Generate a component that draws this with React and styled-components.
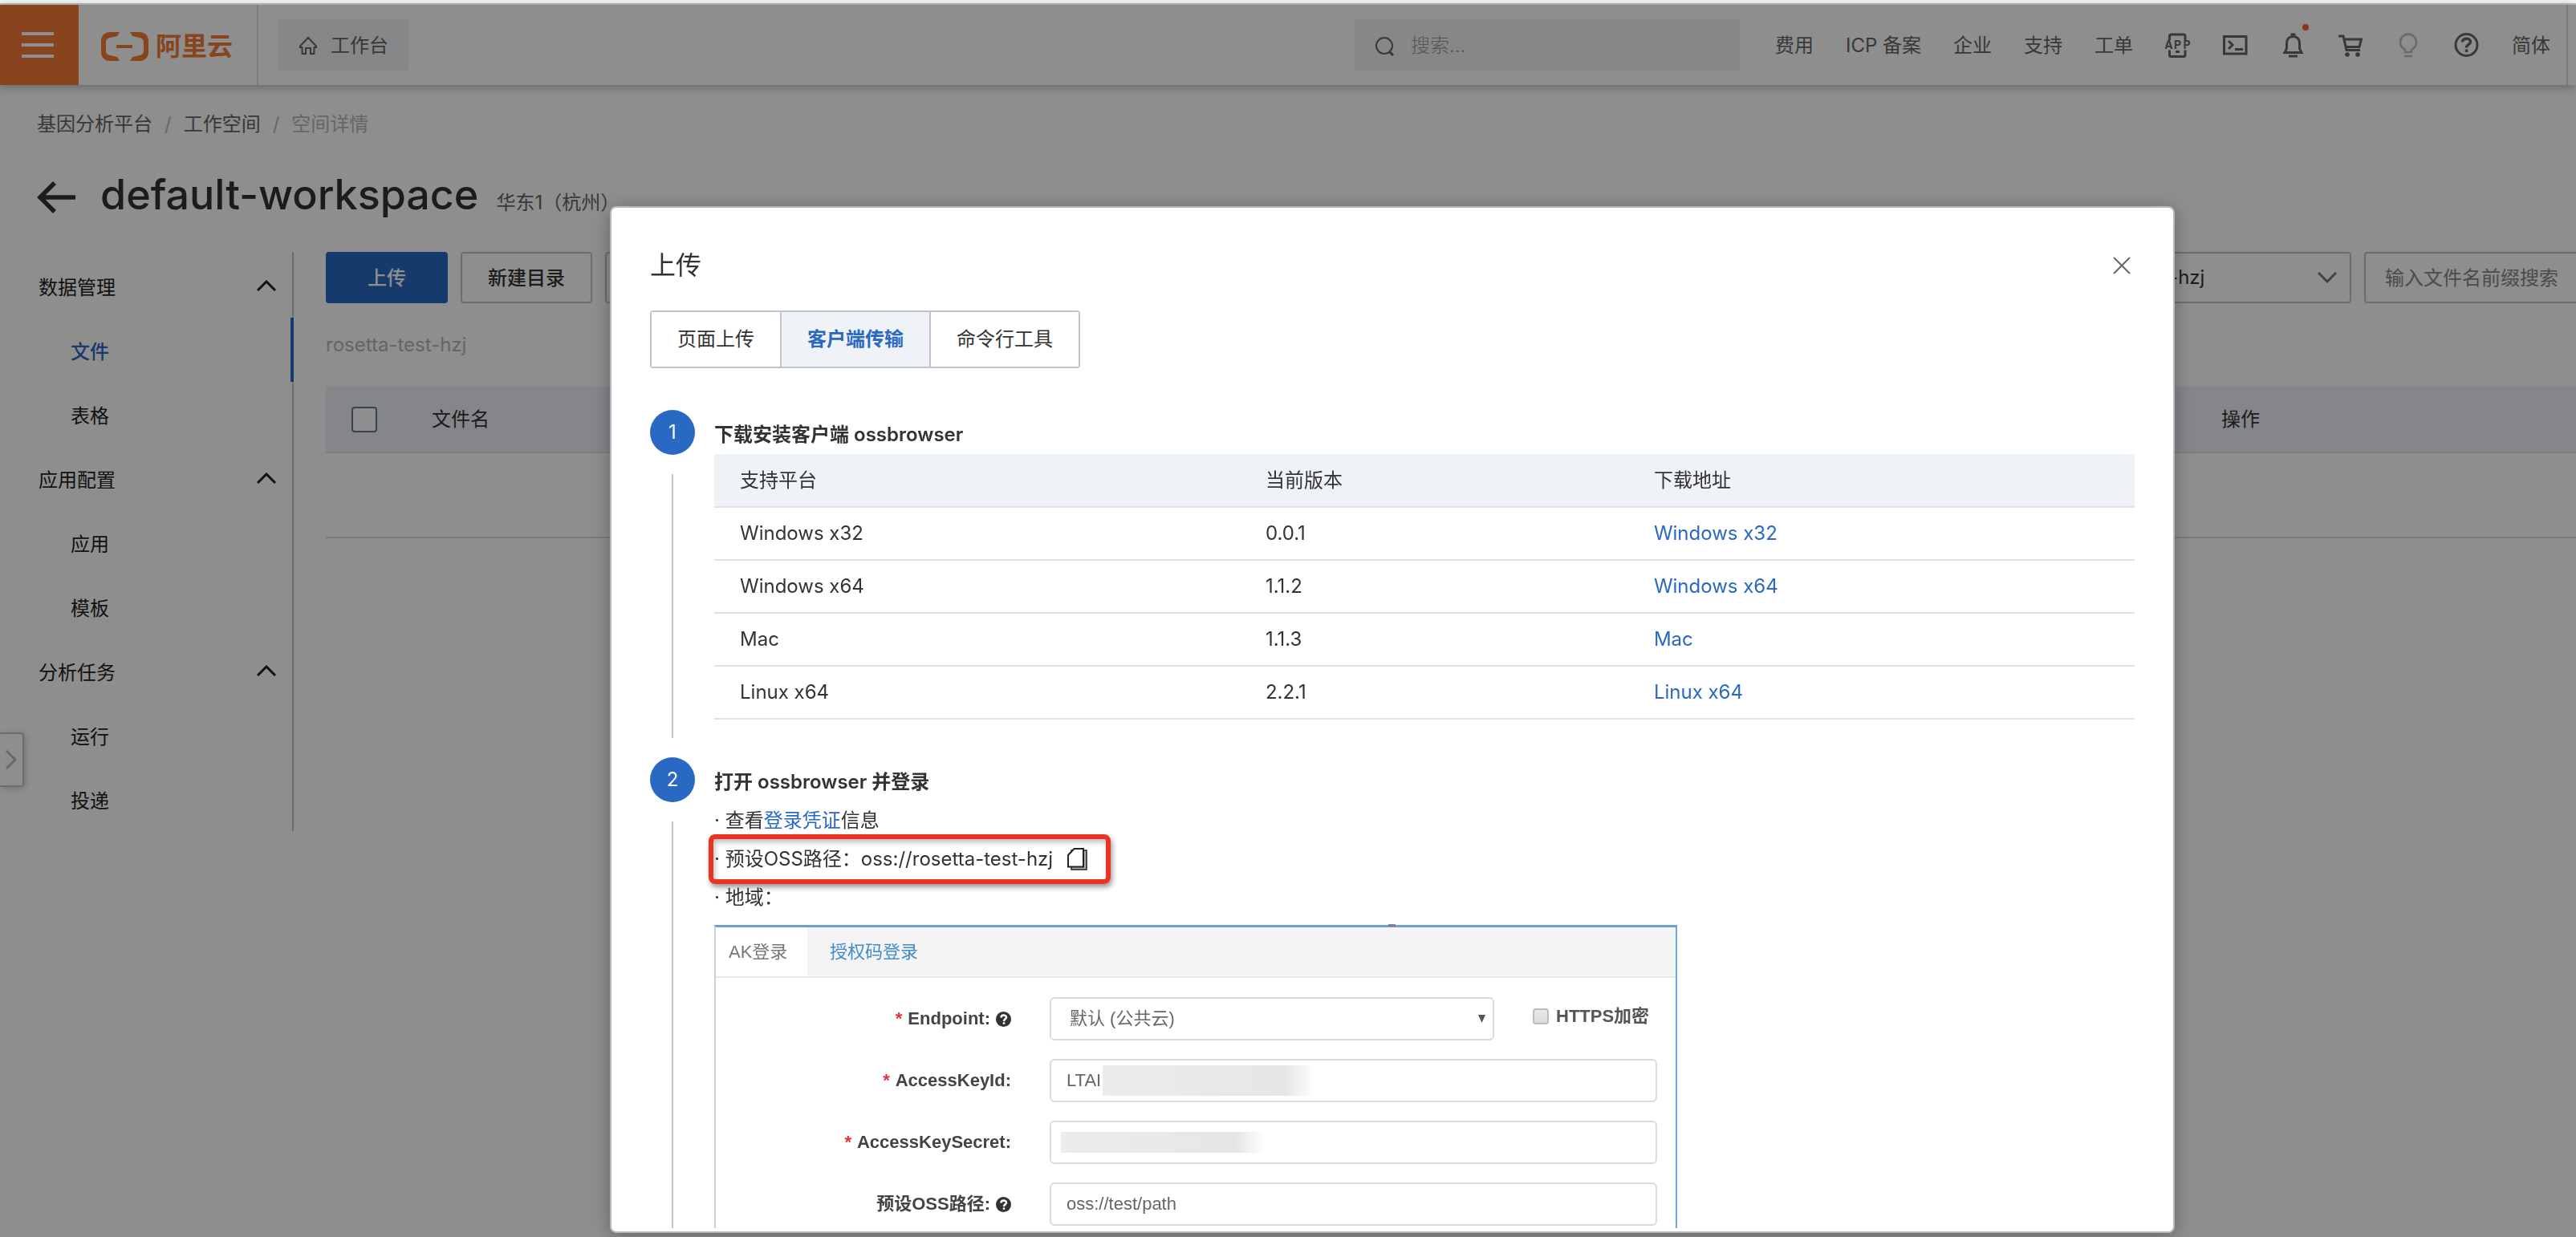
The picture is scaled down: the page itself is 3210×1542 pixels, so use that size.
import React, { useState } from "react";
import styled, { createGlobalStyle } from "styled-components";

const GlobalStyle = createGlobalStyle`
  * {
    box-sizing: border-box;
  }

  body {
    margin: 0;
    overflow: hidden;
    background: #fff;
    color: #333;
    font-family: Inter, "Noto Sans CJK SC", sans-serif;
    font-size: 24px;
    line-height: 48px;
  }

  button,
  input,
  select {
    font: inherit;
    color: inherit;
  }

  a {
    color: inherit;
    text-decoration: none;
  }

  svg {
    display: block;
    flex: none;
  }
`;

// Page shell
const Page = styled.div`
  min-height: 100vh;
`;

const TopStrip = styled.div`
  height: 6px;
  background: #f5f5f5;
  border-bottom: 2px solid #bdbfbe;
`;

const Header = styled.header`
  position: relative;
  display: flex;
  align-items: center;
  height: 100px;
  color: #666;
  box-shadow: 0 2px 12px rgba(0, 0, 0, 0.3);
`;

const MenuButton = styled.button`
  display: flex;
  justify-content: center;
  align-items: center;
  width: 98px;
  height: 100px;
  padding: 0 4px 0 0;
  border: none;
  background: #f27b35;
`;

const Logo = styled.a`
  display: flex;
  align-items: center;
  gap: 8px;
  height: 100px;
  padding: 4px 30px 0 28px;
  border-right: 2px solid #e0e0e0;
  color: #f27b35;
  font-size: 32px;
  font-weight: 700;
`;

const HomeLink = styled.a`
  display: flex;
  align-items: center;
  gap: 16px;
  height: 64px;
  margin-left: 24px;
  padding: 2px 26px 0;
  border-radius: 4px;
  background: #eff2f6;
`;

const SearchBox = styled.label`
  display: flex;
  align-items: center;
  gap: 20px;
  width: 480px;
  height: 64px;
  margin-left: auto;
  padding: 2px 24px 0;
  background: #eff2f6;
`;

const SearchInput = styled.input`
  flex: 1;
  min-width: 0;
  padding: 0;
  border: none;
  background: none;
  outline: none;

  &::placeholder {
    color: #999;
    font-weight: 300;
    opacity: 1;
  }
`;

const TopMenu = styled.nav`
  display: flex;
  align-items: center;
  gap: 40px;
  height: 100px;
  margin: 0 10px 0 44px;
  padding: 2px 20px 0 0;
  border-right: 2px solid #dcdcdc;
`;

const IconLink = styled.a`
  position: relative;
  color: ${(props) => (props.$muted ? "#bbbec2" : "#666")};
`;

const Dot = styled.span`
  position: absolute;
  top: -11px;
  right: -3px;
  width: 8px;
  height: 8px;
  border-radius: 50%;
  background: #f0672a;
`;

const Breadcrumb = styled.nav`
  display: flex;
  gap: 15px;
  padding: 25px 46px 0;
`;

const Crumb = styled.a`
  color: ${(props) => (props.$current ? "#b8b8b8" : "#666")};
`;

const Slash = styled.span`
  color: #bbb;
`;

const TitleRow = styled.div`
  display: flex;
  align-items: center;
  gap: 30px;
  padding: 28px 46px 0;
`;

const Title = styled.h1`
  margin: 0;
  padding-top: 4px;
  font-size: 52px;
  font-weight: 500;
  line-height: 64px;
`;

const Region = styled.span`
  margin-left: 22px;
  color: #666;
  font-size: 24px;
  font-weight: 400;
`;

const Workspace = styled.div`
  display: flex;
  gap: 40px;
  margin-top: 29px;
  padding-left: 46px;
`;

// Side navigation
const SideNav = styled.nav`
  flex: none;
  width: 320px;
  padding-top: 2px;
  border-right: 2px solid #c4c4c4;
`;

const GroupButton = styled.button`
  display: flex;
  justify-content: space-between;
  align-items: center;
  width: 100%;
  height: 80px;
  padding: 6px 20px 0 2px;
  border: none;
  background: none;
  color: #222;

  svg {
    margin-bottom: 6px;
  }
`;

const NavLink = styled.a`
  display: flex;
  align-items: center;
  height: 80px;
  margin-right: -2px;
  padding: 6px 0 0 42px;
  border-right: 4px solid ${(props) => (props.$active ? "#2968c3" : "transparent")};
  color: ${(props) => (props.$active ? "#2968c3" : "#222")};
  font-weight: ${(props) => (props.$active ? 500 : 400)};
`;

const DrawerHandle = styled.button`
  position: fixed;
  left: 0;
  top: 913px;
  display: flex;
  justify-content: center;
  align-items: center;
  width: 30px;
  height: 68px;
  padding: 0;
  border: 2px solid #c4c4c4;
  border-left: none;
  border-radius: 0 4px 4px 0;
  background: #fff;
  color: #bbb;
  box-shadow: 2px 2px 8px rgba(0, 0, 0, 0.2);
`;

// File list
const Content = styled.main`
  flex: 1;
  min-width: 0;
`;

const Toolbar = styled.div`
  display: flex;
  gap: 16px;
`;

const Button = styled.button`
  height: 64px;
  padding: 2px ${(props) => (props.$primary ? "52px" : "32px")} 0;
  border: ${(props) => (props.$primary ? "none" : "2px solid #c0c4cc")};
  border-radius: 4px;
  background: ${(props) => (props.$primary ? "#2968c3" : "#fff")};
  color: ${(props) => (props.$primary ? "#fff" : "#333")};
  font-weight: 500;
`;

const BucketPicker = styled.div`
  position: relative;
  width: 376px;
  margin-left: auto;
`;

const BucketSelect = styled.select`
  width: 100%;
  height: 64px;
  padding: 0 16px;
  border: 2px solid #c0c4cc;
  border-radius: 4px;
  background: #fff;
  appearance: none;
`;

const PickerArrow = styled.span`
  position: absolute;
  top: 25px;
  right: 18px;
  color: #777;
  pointer-events: none;
`;

const PrefixInput = styled.input`
  width: 264px;
  height: 64px;
  padding: 0 0 0 24px;
  border: 2px solid #c0c4cc;
  border-right: none;
  border-radius: 4px 0 0 4px;
  outline: none;

  &::placeholder {
    color: #888;
    opacity: 1;
  }
`;

const PathText = styled.div`
  margin: 28px 0;
  color: #b5b5b5;
`;

const FileTable = styled.table`
  width: 100%;
  border-collapse: collapse;
  table-layout: fixed;

  th {
    height: 82px;
    padding: 0 32px;
    border-bottom: 2px solid #dedede;
    background: #eef0f7;
    text-align: left;
    font-weight: 400;
  }

  td {
    height: 106px;
    border-bottom: 2px solid #dedede;
  }
`;

const CheckBox = styled.input`
  display: block;
  width: 32px;
  height: 32px;
  margin: 0;
  border: 2px solid #66788c;
  border-radius: 4px;
  background: #fff;
  appearance: none;
`;

// Dialog
const Overlay = styled.div`
  position: fixed;
  inset: 6px 0 0;
  display: flex;
  padding: 251px 500px 5px 760px;
  background: rgba(0, 0, 0, 0.445);
`;

const Dialog = styled.section`
  flex: 1;
  display: flex;
  flex-direction: column;
  min-width: 0;
  padding: 48px 48px 4px;
  border: 2px solid #b4bac2;
  border-radius: 8px;
  background: #fff;
  box-shadow: 0 4px 24px rgba(0, 0, 0, 0.3);
`;

const DialogHeader = styled.div`
  display: flex;
  justify-content: space-between;
  align-items: center;
`;

const DialogTitle = styled.h2`
  margin: 0;
  font-size: 32px;
  font-weight: 400;
`;

const CloseButton = styled.button`
  padding: 0 5px;
  border: none;
  background: none;
  color: #666;
`;

const Tabs = styled.div`
  flex: none;
  display: flex;
  align-self: flex-start;
  margin: 32px 0 52px;
  border: 2px solid #c0c4cc;
  border-radius: 4px;
`;

const Tab = styled.button`
  height: 68px;
  padding: 0 32px;
  border: none;
  background: ${(props) => (props.$active ? "#eff2f7" : "#fff")};
  color: ${(props) => (props.$active ? "#2968c3" : "#333")};
  font-weight: ${(props) => (props.$active ? 700 : 400)};

  & + & {
    border-left: 2px solid #c0c4cc;
  }
`;

const Steps = styled.div`
  flex: 1;
  min-height: 0;
  overflow: hidden;
`;

const StepRow = styled.div`
  display: flex;
  gap: 24px;
`;

const StepRail = styled.div`
  flex: none;
  display: flex;
  flex-direction: column;
  align-items: center;
  width: 56px;

  &::after {
    content: "";
    flex: 1;
    width: 2px;
    margin: 24px 0;
    background: #c0c4cc;
  }
`;

const StepNumber = styled.span`
  width: 56px;
  height: 56px;
  border-radius: 50%;
  background: #2968c3;
  color: #fff;
  line-height: 56px;
  text-align: center;
`;

const StepBody = styled.div`
  flex: 1;
  min-width: 0;
  padding: 7px 0 47px;
`;

const StepTitle = styled.h3`
  margin: 0;
  font-size: 24px;
  font-weight: 600;
`;

const DownloadTable = styled.table`
  width: 100%;
  border-collapse: collapse;
  table-layout: fixed;

  th,
  td {
    height: 66px;
    padding: 0 32px;
    border-bottom: 2px solid #e0e1e3;
    text-align: left;
    font-weight: 400;
  }

  th {
    background: #eff2f7;
  }
`;

const Link = styled.a`
  color: #2968c3;
`;

const Hint = styled.p`
  margin: 0;
`;

const PathHint = styled.div`
  position: relative;
  display: flex;
  align-items: center;
  width: fit-content;
`;

const CopyButton = styled.button`
  margin-left: 18px;
  padding: 0;
  border: none;
  background: none;
`;

const Highlight = styled.span`
  position: absolute;
  inset: -7px -29px -7px -7px;
  border: 6px solid #eb3323;
  border-radius: 8px;
  box-shadow: 2px 4px 6px rgba(0, 0, 0, 0.4), inset 2px 4px 6px rgba(0, 0, 0, 0.25);
  pointer-events: none;
`;

// Login form preview
const LoginCard = styled.form`
  position: relative;
  max-width: 1200px;
  margin-top: 10px;
  border: 2px solid #cfcfcf;
  border-top: 3px solid #6d9fd4;
  border-right: 2px solid #6da5e3;
  color: #666;
  font-family: "Liberation Sans", "Noto Sans CJK SC", sans-serif;
  font-size: 22px;
  line-height: 32px;
`;

const CardMark = styled.span`
  position: absolute;
  top: -4px;
  left: 838px;
  width: 9px;
  height: 3px;
  background: #8b7f92;
`;

const LoginTabs = styled.div`
  display: flex;
  background: #f4f4f4;
  border-bottom: 2px solid #e8e8e8;
`;

const LoginTab = styled.button`
  width: ${(props) => (props.$active ? "114px" : "auto")};
  height: 61px;
  margin-bottom: ${(props) => (props.$active ? "-2px" : "0")};
  padding: ${(props) => (props.$active ? "0 16px" : "0 28px")};
  border: none;
  background: ${(props) => (props.$active ? "#fff" : "none")};
  color: ${(props) => (props.$active ? "#777" : "#428bca")};
  text-align: left;
  white-space: nowrap;
`;

const LoginFields = styled.div`
  display: grid;
  gap: 23px;
  padding: 24px 23px 40px 0;
`;

const FieldRow = styled.div`
  display: grid;
  grid-template-columns: 368px 1fr;
  align-items: center;
  column-gap: 48px;
`;

const FieldLabel = styled.label`
  display: flex;
  justify-content: flex-end;
  align-items: center;
  gap: 7px;
  color: #444;
  font-weight: 700;
`;

const Required = styled.span`
  color: #e0313c;
`;

const FieldLine = styled.div`
  position: relative;
  display: flex;
  align-items: center;
`;

const Field = styled.input`
  width: 100%;
  height: 54px;
  padding: 0 19px;
  border: 2px solid #dadada;
  border-radius: 6px;
  background: #fff;
  outline: none;
`;

const EndpointPicker = styled.div`
  position: relative;
  width: 554px;
`;

const EndpointSelect = styled.select`
  width: 100%;
  height: 54px;
  padding: 0 23px;
  border: 2px solid #dadada;
  border-radius: 6px;
  background: #fff;
  appearance: none;
`;

const EndpointArrow = styled.span`
  position: absolute;
  right: 11px;
  top: 22px;
  width: 9px;
  height: 10px;
  background: #555;
  clip-path: polygon(0 0, 100% 0, 50% 100%);
  pointer-events: none;
`;

const HttpsLabel = styled.label`
  display: flex;
  align-items: center;
  gap: 9px;
  margin-left: 48px;
  padding-bottom: 6px;
  color: #555;
  font-weight: 700;
  white-space: nowrap;
`;

const HttpsCheck = styled.input`
  width: 20px;
  height: 20px;
  margin: 0;
  border: 2px solid #bbb;
  border-radius: 4px;
  background: linear-gradient(#e8e8e8, #dcdcdc);
  appearance: none;
`;

const Redacted = styled.span`
  position: absolute;
  left: ${(props) => (props.$large ? "66px" : "14px")};
  width: ${(props) => (props.$large ? "266px" : "256px")};
  height: ${(props) => (props.$large ? "38px" : "26px")};
  background: linear-gradient(90deg, #ececec, #e9e9e9 40%, #e6e6e6 85%, #fff);
`;

// Icons
const BarsIcon = () => (
  <svg width="40" height="32" viewBox="0 0 40 32" fill="#fff">
    <path d="M0 0h40v4H0zM0 14h40v4H0zM0 28h40v4H0z" />
  </svg>
);

const CloudLogo = () => (
  <svg width="60" height="36" viewBox="0 0 60 36" fill="currentColor">
    <path d="M23 0H11C4 0 0 5 0 11v14c0 6 4 11 11 11h12l-3-5-9-2c-3-1-5-2-5-5V12c0-3 2-4 5-5l9-2z" />
    <path d="M36 0h12c7 0 11 5 11 11v14c0 6-4 11-11 11H36l3-5 9-2c3-1 5-2 5-5V12c0-3-2-4-5-5l-9-2z" />
    <path d="M19 16h20v4H19z" />
  </svg>
);

const HomeIcon = () => (
  <svg width="24" height="24" viewBox="0 0 24 24" fill="none" stroke="currentColor" strokeWidth="2">
    <path d="M12 2L2 12.500V14h2.500v8H9v-7h6v7h4.500v-8H22v-1.500z" />
  </svg>
);

const SearchIcon = () => (
  <svg width="26" height="26" viewBox="0 0 26 26" fill="none" stroke="currentColor" strokeWidth="2">
    <circle cx="13" cy="13" r="10" />
    <path d="M19 20l5 5" strokeWidth="3" />
  </svg>
);

const AppIcon = () => (
  <svg width="32" height="32" viewBox="0 0 32 32" fill="none" stroke="currentColor" strokeWidth="3">
    <path d="M5.500 9V4q0-2 2-2h15.500q2 0 2 2v5M5.500 21.500v6q0 2 2 2h15.500q2 0 2-2v-6M13 23.500h5" />
    <text
      x="4.500 15.500 27"
      y="20"
      fill="currentColor"
      stroke="none"
      fontSize="14"
      fontWeight="700"
      textAnchor="middle"
    >
      APP
    </text>
  </svg>
);

const TerminalIcon = () => (
  <svg width="32" height="32" viewBox="0 0 32 32" fill="none" stroke="currentColor" strokeWidth="3">
    <path d="M1.500 4.500h27.500v21.500H1.500zM7 10l5 5-5 5M15 20.500h10" />
  </svg>
);

const BellIcon = () => (
  <svg width="32" height="32" viewBox="0 0 32 32" fill="none" stroke="currentColor" strokeWidth="3">
    <path d="M5 24.500h21l-2.500-5V13c0-5-3-8.500-8-8.500S7.500 8 7.500 13v6.500z" />
    <path d="M12.500 2h6M10 29h11" />
  </svg>
);

const CartIcon = () => (
  <svg width="32" height="32" viewBox="0 0 32 32" fill="none" stroke="currentColor" strokeWidth="3">
    <path d="M0 4h6l4 17.500h17M7 8h21.500L26 17.500H9" />
    <circle cx="11" cy="27" r="2.800" fill="currentColor" stroke="none" />
    <circle cx="24" cy="27" r="2.800" fill="currentColor" stroke="none" />
  </svg>
);

const BulbIcon = () => (
  <svg width="32" height="32" viewBox="0 0 32 32" fill="none" stroke="currentColor" strokeWidth="2.500">
    <path d="M11 24v-3c-3.500-2-6-4.500-6-9C5 6 9.500 1.500 15 1.500S25 6 25 12c0 4.500-2.500 7-6 9v3zM10 29h10" />
  </svg>
);

const HelpIcon = () => (
  <svg width="32" height="32" viewBox="0 0 32 32" fill="none" stroke="currentColor" strokeWidth="3">
    <circle cx="15.500" cy="15" r="13.500" />
    <path d="M10.500 11.500c0-6 10-5.500 10-.5 0 3.500-5 3.500-5 7.500M15.500 20.500v3.500" strokeWidth="3.500" />
  </svg>
);

const ArrowLeftIcon = () => (
  <svg width="49" height="40" viewBox="0 0 49 40" fill="none" stroke="currentColor" strokeWidth="5.500">
    <path d="M48 20H4M22 2L4 20l18 18" />
  </svg>
);

const ChevronUp = () => (
  <svg width="24" height="14" viewBox="0 0 24 14" fill="none" stroke="currentColor" strokeWidth="3">
    <path d="M1 13L12 2l11 11" />
  </svg>
);

const ChevronDown = () => (
  <svg width="24" height="14" viewBox="0 0 24 14" fill="none" stroke="currentColor" strokeWidth="3">
    <path d="M1 1l11 11L23 1" />
  </svg>
);

const ChevronRight = () => (
  <svg width="14" height="24" viewBox="0 0 14 24" fill="none" stroke="currentColor" strokeWidth="3">
    <path d="M1 1l11 11L1 23" />
  </svg>
);

const CloseIcon = () => (
  <svg width="22" height="22" viewBox="0 0 22 22" fill="none" stroke="currentColor" strokeWidth="2">
    <path d="M1 1l20 20M21 1L1 21" />
  </svg>
);

const CopyIcon = () => (
  <svg width="25" height="28" viewBox="0 0 25 28" stroke="#222" strokeWidth="1.500">
    <path d="M5 3h19v24H5z" fill="#a8a8a8" />
    <path d="M8.500 1H20v22.500H1V9z" fill="#fff" strokeWidth="2" />
  </svg>
);

const QuestionMark = () => (
  <svg width="19" height="19" viewBox="0 0 19 19">
    <circle cx="9.500" cy="9.500" r="9.500" fill="#333" />
    <path
      d="M6.500 7.500c0-4 6.500-3.800 6.500-.3 0 2-3 2.300-3 4.800M10 13.200v2.500"
      fill="none"
      stroke="#fff"
      strokeWidth="2.500"
    />
  </svg>
);

const navGroups = [
  { title: "数据管理", items: ["文件", "表格"] },
  { title: "应用配置", items: ["应用", "模板"] },
  { title: "分析任务", items: ["运行", "投递"] },
];

const downloads = [
  { platform: "Windows x32", version: "0.0.1" },
  { platform: "Windows x64", version: "1.1.2" },
  { platform: "Mac", version: "1.1.3" },
  { platform: "Linux x64", version: "2.2.1" },
];

const tabs = ["页面上传", "客户端传输", "命令行工具"];

const LoginPreview = () => (
  <LoginCard onSubmit={(e) => e.preventDefault()}>
    <CardMark />
    <LoginTabs>
      <LoginTab type="button" $active>
        AK登录
      </LoginTab>
      <LoginTab type="button">授权码登录</LoginTab>
    </LoginTabs>
    <LoginFields>
      <FieldRow>
        <FieldLabel htmlFor="endpoint">
          <Required>*</Required>
          Endpoint:
          <QuestionMark />
        </FieldLabel>
        <FieldLine>
          <EndpointPicker>
            <EndpointSelect id="endpoint">
              <option>默认 (公共云)</option>
            </EndpointSelect>
            <EndpointArrow />
          </EndpointPicker>
          <HttpsLabel>
            <HttpsCheck type="checkbox" />
            HTTPS加密
          </HttpsLabel>
        </FieldLine>
      </FieldRow>
      <FieldRow>
        <FieldLabel htmlFor="key-id">
          <Required>*</Required>
          AccessKeyId:
        </FieldLabel>
        <FieldLine>
          <Field id="key-id" defaultValue="LTAI" />
          <Redacted $large />
        </FieldLine>
      </FieldRow>
      <FieldRow>
        <FieldLabel htmlFor="key-secret">
          <Required>*</Required>
          AccessKeySecret:
        </FieldLabel>
        <FieldLine>
          <Field id="key-secret" type="password" />
          <Redacted />
        </FieldLine>
      </FieldRow>
      <FieldRow>
        <FieldLabel htmlFor="oss-path">
          预设OSS路径:
          <QuestionMark />
        </FieldLabel>
        <FieldLine>
          <Field id="oss-path" defaultValue="oss://test/path" />
        </FieldLine>
      </FieldRow>
    </LoginFields>
  </LoginCard>
);

const UploadDialog = () => {
  const [tab, setTab] = useState("客户端传输");

  return (
    <Overlay>
      <Dialog role="dialog" aria-labelledby="upload-title">
        <DialogHeader>
          <DialogTitle id="upload-title">上传</DialogTitle>
          <CloseButton aria-label="关闭">
            <CloseIcon />
          </CloseButton>
        </DialogHeader>
        <Tabs>
          {tabs.map((name) => (
            <Tab key={name} $active={tab === name} onClick={() => setTab(name)}>
              {name}
            </Tab>
          ))}
        </Tabs>
        <Steps>
          <StepRow>
            <StepRail>
              <StepNumber>1</StepNumber>
            </StepRail>
            <StepBody>
              <StepTitle>下载安装客户端 ossbrowser</StepTitle>
              <DownloadTable>
                <colgroup>
                  <col width="37%" />
                  <col width="484" />
                  <col />
                </colgroup>
                <thead>
                  <tr>
                    <th>支持平台</th>
                    <th>当前版本</th>
                    <th>下载地址</th>
                  </tr>
                </thead>
                <tbody>
                  {downloads.map((item) => (
                    <tr key={item.platform}>
                      <td>{item.platform}</td>
                      <td>{item.version}</td>
                      <td>
                        <Link href="#">{item.platform}</Link>
                      </td>
                    </tr>
                  ))}
                </tbody>
              </DownloadTable>
            </StepBody>
          </StepRow>
          <StepRow>
            <StepRail>
              <StepNumber>2</StepNumber>
            </StepRail>
            <StepBody>
              <StepTitle>打开 ossbrowser 并登录</StepTitle>
              <Hint>
                · 查看<Link href="#">登录凭证</Link>信息
              </Hint>
              <PathHint>
                · 预设OSS路径：oss://rosetta-test-hzj
                <CopyButton aria-label="复制">
                  <CopyIcon />
                </CopyButton>
                <Highlight />
              </PathHint>
              <Hint>· 地域：</Hint>
              <LoginPreview />
            </StepBody>
          </StepRow>
        </Steps>
      </Dialog>
    </Overlay>
  );
};

const App = () => {
  return (
    <Page lang="zh-CN">
      <GlobalStyle />
      <TopStrip />
      <Header>
        <MenuButton aria-label="菜单">
          <BarsIcon />
        </MenuButton>
        <Logo href="#">
          <CloudLogo />
          阿里云
        </Logo>
        <HomeLink href="#">
          <HomeIcon />
          工作台
        </HomeLink>
        <SearchBox>
          <SearchIcon />
          <SearchInput aria-label="搜索" placeholder="搜索..." />
        </SearchBox>
        <TopMenu>
          <a href="#">费用</a>
          <a href="#">ICP 备案</a>
          <a href="#">企业</a>
          <a href="#">支持</a>
          <a href="#">工单</a>
          <IconLink href="#" aria-label="App">
            <AppIcon />
          </IconLink>
          <IconLink href="#" aria-label="Cloud Shell">
            <TerminalIcon />
          </IconLink>
          <IconLink href="#" aria-label="消息">
            <BellIcon />
            <Dot />
          </IconLink>
          <IconLink href="#" aria-label="购物车">
            <CartIcon />
          </IconLink>
          <IconLink href="#" aria-label="提示" $muted>
            <BulbIcon />
          </IconLink>
          <IconLink href="#" aria-label="帮助">
            <HelpIcon />
          </IconLink>
          <a href="#">简体</a>
        </TopMenu>
      </Header>

      <Breadcrumb>
        <Crumb href="#">基因分析平台</Crumb>
        <Slash>/</Slash>
        <Crumb href="#">工作空间</Crumb>
        <Slash>/</Slash>
        <Crumb href="#" $current>
          空间详情
        </Crumb>
      </Breadcrumb>

      <TitleRow>
        <ArrowLeftIcon />
        <Title>
          default-workspace
          <Region>华东1（杭州）</Region>
        </Title>
      </TitleRow>

      <Workspace>
        <SideNav>
          {navGroups.map((group) => (
            <React.Fragment key={group.title}>
              <GroupButton>
                {group.title}
                <ChevronUp />
              </GroupButton>
              {group.items.map((item) => (
                <NavLink key={item} href="#" $active={item === "文件"}>
                  {item}
                </NavLink>
              ))}
            </React.Fragment>
          ))}
        </SideNav>

        <Content>
          <Toolbar>
            <Button $primary>上传</Button>
            <Button>新建目录</Button>
            <Button aria-label="更多" />
            <BucketPicker>
              <BucketSelect aria-label="Bucket">
                <option>rosetta-test-hzj</option>
              </BucketSelect>
              <PickerArrow>
                <ChevronDown />
              </PickerArrow>
            </BucketPicker>
            <PrefixInput aria-label="文件名前缀" placeholder="输入文件名前缀搜索" />
          </Toolbar>
          <PathText>rosetta-test-hzj</PathText>
          <FileTable>
            <colgroup>
              <col width="100" />
              <col />
              <col width="474" />
            </colgroup>
            <thead>
              <tr>
                <th>
                  <CheckBox type="checkbox" aria-label="全选" />
                </th>
                <th>文件名</th>
                <th>操作</th>
              </tr>
            </thead>
            <tbody>
              <tr>
                <td colSpan="3" />
              </tr>
            </tbody>
          </FileTable>
        </Content>
      </Workspace>

      <DrawerHandle aria-label="展开">
        <ChevronRight />
      </DrawerHandle>

      <UploadDialog />
    </Page>
  );
};

export default App;
